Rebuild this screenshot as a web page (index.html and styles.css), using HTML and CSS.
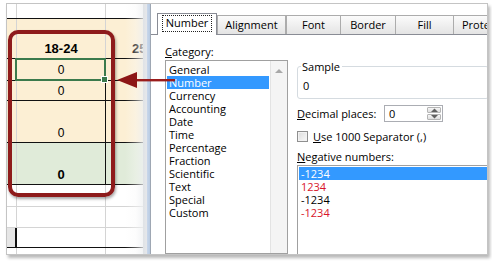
FILE: index.html
```html
<!DOCTYPE html>
<html>
<head>
<meta charset="utf-8">
<link rel="stylesheet" href="styles.css">
</head>
<body>
<div class="frame">
  <div class="sheet">
    <div class="row r0"><div class="c ca"></div><div class="c cb"></div><div class="c cc"></div></div>
    <div class="row hdr peach"><div class="c ca"></div><div class="c cb bold">18-24</div><div class="c cc bold">25</div></div>
    <div class="row r1 peach dark"><div class="c ca"></div><div class="c cb mid">0</div><div class="c cc"></div></div>
    <div class="row r2 peach dark"><div class="c ca"></div><div class="c cb">0</div><div class="c cc"></div></div>
    <div class="row r3 peach dark"><div class="c ca"></div><div class="c cb">0</div><div class="c cc"></div></div>
    <div class="row r4 green dark"><div class="c ca"></div><div class="c cb bold">0</div><div class="c cc"></div></div>
    <div class="row r5"><div class="c ca"></div><div class="c cb"></div><div class="c cc"></div></div>
    <div class="row r6"><div class="c ca"></div><div class="c cb"></div><div class="c cc"></div></div>
    <div class="row r7"><div class="c ca stub"></div><div class="c cb"></div><div class="c cc"></div></div>
    <div class="row r8"><div class="c ca"></div><div class="c cb"></div><div class="c cc"></div></div>
    <div class="fade"></div>
    <div class="selcell"><span class="handle"></span></div>
    <div class="redbox"></div>
  </div>
  <div class="edge"></div>
  <div class="dialog">
    <div class="tabs">
      <div class="tab active w-number"><span class="focus">Number</span></div>
      <div class="tab w-align">Alignment</div>
      <div class="tab w-font">Font</div>
      <div class="tab w-border">Border</div>
      <div class="tab w-fill">Fill</div>
      <div class="tab w-prot">Protection</div>
    </div>
    <div class="panel">
      <div class="leftcol">
        <div class="label cat"><u>C</u>ategory:</div>
        <div class="listbox">
          <div class="items">
            <div class="item">General</div>
            <div class="item sel">Number</div>
            <div class="item">Currency</div>
            <div class="item">Accounting</div>
            <div class="item">Date</div>
            <div class="item">Time</div>
            <div class="item">Percentage</div>
            <div class="item">Fraction</div>
            <div class="item">Scientific</div>
            <div class="item">Text</div>
            <div class="item">Special</div>
            <div class="item">Custom</div>
          </div>
          <div class="scroll">
            <svg class="uparrow" width="8" height="5" viewBox="0 0 8 5"><path d="M0 5 L4 1 L8 5 Z" fill="#a8a8a8"/></svg>
          </div>
        </div>
      </div>
      <div class="rightcol">
        <div class="group">
          <span class="legend">Sample</span>
          <div class="sample">0</div>
        </div>
        <div class="decrow">
          <div class="label"><u>D</u>ecimal places:</div>
          <div class="spinbox">
            <div class="spinval">0</div>
            <div class="spin">
              <div class="sbtn"><svg width="7" height="4" viewBox="0 0 7 4"><path d="M0 4 L3.5 0.5 L7 4 Z" fill="#606060"/></svg></div>
              <div class="sbtn"><svg width="7" height="4" viewBox="0 0 7 4"><path d="M0 0 L3.5 3.5 L7 0 Z" fill="#606060"/></svg></div>
            </div>
          </div>
        </div>
        <div class="chkrow">
          <span class="chk"></span>
          <span class="label"><u>U</u>se 1000 Separator (,)</span>
        </div>
        <div class="label neg"><u>N</u>egative numbers:</div>
        <div class="neglist">
          <div class="item sel">-1234</div>
          <div class="item red">1234</div>
          <div class="item">-1234</div>
          <div class="item red">-1234</div>
        </div>
      </div>
    </div>
  </div>
  <svg class="arrow" width="62" height="20" viewBox="0 0 62 20">
    <rect x="20" y="9" width="40" height="2.4" fill="#9a1c1c"/>
    <path d="M2 10 L22 2 L22 18 Z" fill="#8d1616"/>
  </svg>
</div>
</body>
</html>
```
FILE: styles.css
```css
html, body {
  margin: 0;
  padding: 0;
  background: #ffffff;
}
body {
  width: 492px;
  height: 263px;
  overflow: hidden;
}
.frame {
  position: relative;
  margin: 3px 0 0 6px;
  width: 480px;
  height: 250px;
  border: 1px solid #c4c4c4;
  box-shadow: 2px 3px 3px rgba(0,0,0,0.28);
  display: flex;
  overflow: hidden;
  background: #fff;
}
/* ---------- spreadsheet ---------- */
.sheet {
  position: relative;
  width: 136px;
  flex: none;
  display: flex;
  flex-direction: column;
  font-family: "Liberation Sans", Arial, sans-serif;
  font-size: 12px;
  color: #000;
  overflow: hidden;
}
.row {
  display: flex;
  flex: none;
  box-sizing: border-box;
  border-bottom: 1px solid #d4d4d4;
}
.row.r0 { height: 15px; border-bottom-color: #111; }
.row.hdr { height: 40px; border-bottom-color: #111; }
.row.r1 { height: 22px; border-bottom-color: #111; }
.row.r2 { height: 20px; border-bottom-color: #111; }
.row.r3 { height: 42px; border-bottom-color: #111; }
.row.r4 { height: 42px; border-bottom-color: #111; }
.row.r5 { height: 22px; }
.row.r6 { height: 21px; }
.row.r7 { height: 20px; border-bottom-color: #111; }
.row.r8 { height: 20px; }
.peach { background: #fcefd4; }
.green { background: #e0ebd9; }
.c {
  box-sizing: border-box;
  display: flex;
  align-items: flex-end;
  justify-content: center;
  padding-bottom: 2px;
  border-right: 1px solid #d4d4d4;
}
.c.mid { align-items: center; padding-bottom: 0; }
.dark .c.cb { border-right-color: #111; }
.ca { width: 10px; flex: none; }
.cb { width: 89px; flex: none; }
.cc { flex: 1; border-right: none; justify-content: flex-start; padding-left: 26px; }
.bold { font-weight: bold; font-size: 13px; }
.stub { background: #e6e6e6; border-right: 2px solid #111; }
.fade {
  position: absolute;
  top: 0;
  right: 0;
  width: 18px;
  height: 100%;
  background: linear-gradient(to right, rgba(255,255,255,0) 0%, rgba(248,248,248,0.35) 60%, rgba(238,240,242,0.75) 100%);
}
.selcell {
  position: absolute;
  left: 8px;
  top: 54px;
  width: 91px;
  height: 23px;
  box-sizing: border-box;
  border: 2px solid #3b7a4c;
}
.handle {
  position: absolute;
  right: -4px;
  bottom: -4px;
  width: 5px;
  height: 5px;
  background: #3b7a4c;
  border: 1px solid #fff;
}
.redbox {
  position: absolute;
  left: 1px;
  top: 26px;
  width: 107px;
  height: 167px;
  box-sizing: border-box;
  border: 4px solid #8e1b1b;
  border-radius: 10px;
  box-shadow: 1px 2px 3px rgba(0,0,0,0.35), inset 0 0 1px rgba(255,255,255,0.4);
}
/* ---------- window edge ---------- */
.edge {
  width: 8px;
  flex: none;
  background: linear-gradient(to right, #dfe2e6 0px, #e6e8eb 4px, #c9d7ea 4px, #b8cbe3 7px, #9ea7b3 7px);
}
/* ---------- dialog ---------- */
.dialog {
  flex: 1;
  display: flex;
  flex-direction: column;
  font-family: "Open Sans", "Segoe UI", sans-serif;
  font-size: 11px;
  color: #000;
  background: #fff;
  min-width: 0;
}
.tabs {
  display: flex;
  align-items: flex-end;
  padding: 8px 0 0 6px;
  height: 22px;
  border-bottom: 1px solid #898c95;
  flex: none;
}
.tab {
  box-sizing: border-box;
  height: 19px;
  flex: none;
  display: flex;
  align-items: center;
  justify-content: center;
  border: 1px solid #acacac;
  border-bottom: none;
  background: linear-gradient(#fbfbfb, #e4e4e4);
  line-height: 14px;
  overflow: hidden;
  white-space: nowrap;
}
.tab.active {
  height: 22px;
  margin-bottom: -1px;
  background: #fff;
  border-color: #898c95;
  position: relative;
  z-index: 1;
  padding-bottom: 2px;
}
.focus {
  outline: 1px dotted #222;
  outline-offset: 0;
  padding: 0 3px 1px;
}
.w-number { width: 60px; }
.w-align { width: 69px; margin-left: 0; }
.w-font { width: 55px; }
.w-border { width: 56px; margin-left: -1px; }
.w-fill { width: 59px; margin-left: -1px; }
.w-prot { width: 60px; margin-left: -1px; justify-content: flex-start; padding-left: 8px; }
.panel {
  flex: 1;
  display: flex;
  gap: 9px;
  padding-left: 14px;
  min-height: 0;
}
.leftcol {
  width: 123px;
  flex: none;
  display: flex;
  flex-direction: column;
}
.label { line-height: 15px; white-space: nowrap; }
.cat { margin-top: 9px; margin-bottom: 1px; }
.listbox {
  flex: 1;
  box-sizing: border-box;
  border: 1px solid #a0a0a0;
  display: flex;
  min-height: 0;
}
.items {
  flex: 1;
  padding: 2px 1px 0;
}
.item {
  line-height: 13px;
  height: 13px;
  padding-left: 2px;
  white-space: nowrap;
}
.item.sel {
  background: #3399ff;
  color: #fff;
}
.item.red { color: #d8142a; }
.scroll {
  width: 16px;
  flex: none;
  border-left: 1px solid #e3e3e3;
  background: #f4f4f4;
  display: flex;
  justify-content: center;
}
.uparrow { margin-top: 7px; }
.rightcol {
  width: 192px;
  flex: none;
  display: flex;
  flex-direction: column;
}
.group {
  margin-top: 31px;
  height: 33px;
  box-sizing: border-box;
  border: 1px solid #d5dbe0;
  border-radius: 3px;
}
.legend {
  display: block;
  width: max-content;
  margin: -8px 0 0 3px;
  padding: 0 2px 0 1px;
  background: #fff;
  line-height: 15px;
}
.sample {
  padding-left: 5px;
  line-height: 15px;
  margin-top: 4px;
}
.decrow {
  margin-top: 6px;
  height: 17px;
  display: flex;
  align-items: center;
  justify-content: space-between;
  padding-right: 46px;
}
.spinbox {
  width: 59px;
  height: 17px;
  box-sizing: border-box;
  border: 1px solid #abadb3;
  display: flex;
}
.spinval {
  flex: 1;
  padding-left: 4px;
  line-height: 15px;
}
.spin {
  width: 16px;
  display: flex;
  flex-direction: column;
  padding: 1px;
  gap: 1px;
  box-sizing: border-box;
}
.sbtn {
  flex: 1;
  border: 1px solid #b5b5b5;
  background: linear-gradient(#f6f6f6, #dedede);
  display: flex;
  align-items: center;
  justify-content: center;
  border-radius: 1px;
}
.chkrow {
  margin-top: 7px;
  display: flex;
  align-items: center;
  gap: 5px;
  height: 15px;
}
.chk {
  width: 11px;
  height: 11px;
  box-sizing: border-box;
  border: 1px solid #8f8f8f;
  background: linear-gradient(135deg, #dcdcdc, #f8f8f8);
  box-shadow: inset 0 0 0 1px #f2f2f2;
}
.neg { margin-top: 5px; }
.neglist {
  margin-top: 1px;
  flex: 1;
  border-top: 1px solid #a0a0a0;
  border-left: 1px solid #a0a0a0;
  padding: 1px 0 0 1px;
}
.neglist .item { padding-left: 2px; }
.arrow {
  position: absolute;
  left: 108px;
  top: 66px;
}
```
